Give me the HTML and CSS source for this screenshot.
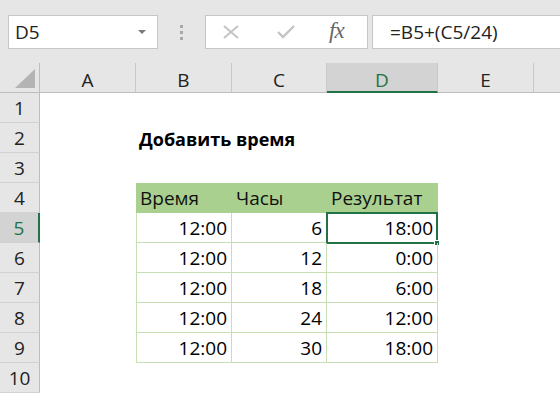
FILE: index.html
```html
<!DOCTYPE html>
<html lang="ru">
<head>
    <meta charset="UTF-8">
    <title>Добавить время</title>
    <link rel="stylesheet" href="styles.css">
</head>
<body>
    <div class="formula-bar">
        <div class="name-box">
            <span>D5</span>
            <span class="drop-arrow"></span>
        </div>
        <div class="grip"><i></i><i></i><i></i></div>
        <div class="fx-buttons">
            <svg class="btn-icon" width="18" height="14" viewBox="0 0 18 14">
                <path d="M2 1 L16 13 M16 1 L2 13" stroke="#c4c4c4" stroke-width="2" fill="none"/>
            </svg>
            <svg class="btn-icon" width="20" height="14" viewBox="0 0 20 14">
                <path d="M2 7 L7 12 L18 1" stroke="#c4c4c4" stroke-width="2.4" fill="none"/>
            </svg>
            <span class="fx">fx</span>
        </div>
        <div class="formula-input">=B5+(C5/24)</div>
    </div>

    <div class="sheet">
        <div class="corner"><span class="corner-tri"></span></div>
        <div class="col-head">A</div>
        <div class="col-head">B</div>
        <div class="col-head">C</div>
        <div class="col-head selected">D</div>
        <div class="col-head">E</div>
        <div class="col-head last"></div>

        <div class="row-head">1</div>
        <div class="cell"></div><div class="cell"></div><div class="cell"></div><div class="cell"></div><div class="cell"></div><div class="cell"></div>

        <div class="row-head">2</div>
        <div class="cell"></div><div class="cell title">Добавить время</div><div class="cell"></div><div class="cell"></div><div class="cell"></div><div class="cell"></div>

        <div class="row-head">3</div>
        <div class="cell"></div><div class="cell"></div><div class="cell"></div><div class="cell"></div><div class="cell"></div><div class="cell"></div>

        <div class="row-head">4</div>
        <div class="cell"></div>
        <div class="cell th">Время</div>
        <div class="cell th">Часы</div>
        <div class="cell th">Результат</div>
        <div class="cell"></div><div class="cell"></div>

        <div class="row-head selected">5</div>
        <div class="cell"></div>
        <div class="cell td first">12:00</div>
        <div class="cell td">6</div>
        <div class="cell td active">18:00<span class="handle"></span></div>
        <div class="cell"></div><div class="cell"></div>

        <div class="row-head">6</div>
        <div class="cell"></div>
        <div class="cell td first">12:00</div>
        <div class="cell td">12</div>
        <div class="cell td">0:00</div>
        <div class="cell"></div><div class="cell"></div>

        <div class="row-head">7</div>
        <div class="cell"></div>
        <div class="cell td first">12:00</div>
        <div class="cell td">18</div>
        <div class="cell td">6:00</div>
        <div class="cell"></div><div class="cell"></div>

        <div class="row-head">8</div>
        <div class="cell"></div>
        <div class="cell td first">12:00</div>
        <div class="cell td">24</div>
        <div class="cell td">12:00</div>
        <div class="cell"></div><div class="cell"></div>

        <div class="row-head">9</div>
        <div class="cell"></div>
        <div class="cell td first">12:00</div>
        <div class="cell td">30</div>
        <div class="cell td">18:00</div>
        <div class="cell"></div><div class="cell"></div>

        <div class="row-head">10</div>
        <div class="cell"></div><div class="cell"></div><div class="cell"></div><div class="cell"></div><div class="cell"></div><div class="cell"></div>
    </div>
</body>
</html>
```

FILE: styles.css
```css
* {
    margin: 0;
    padding: 0;
    box-sizing: border-box;
}

body {
    font-family: "Open Sans", "Noto Sans", sans-serif;
    font-size: 19px;
    color: #111;
    background: #fff;
    width: 560px;
    height: 394px;
    overflow: hidden;
}

/* Formula bar */
.formula-bar {
    height: 63px;
    background: #e6e6e6;
    display: flex;
    align-items: flex-start;
    padding: 15px 0 0 8px;
}

.name-box {
    width: 150px;
    height: 34px;
    background: #fff;
    border: 1px solid #c6c6c6;
    display: flex;
    align-items: center;
    justify-content: space-between;
    padding: 0 11px 0 6px;
    color: #222;
}

.drop-arrow {
    width: 0;
    height: 0;
    border-left: 4px solid transparent;
    border-right: 4px solid transparent;
    border-top: 4px solid #7a7a7a;
}

.grip {
    width: 47px;
    height: 34px;
    display: flex;
    flex-direction: column;
    align-items: center;
    justify-content: center;
    gap: 3px;
}

.grip i {
    display: block;
    width: 3px;
    height: 3px;
    background: #a8a8a8;
}

.fx-buttons {
    width: 163px;
    height: 34px;
    background: #fff;
    border: 1px solid #c6c6c6;
    display: flex;
    align-items: center;
    padding-left: 16px;
}

.btn-icon {
    display: block;
}

.btn-icon + .btn-icon {
    margin-left: 36px;
}

.fx {
    font-family: "Liberation Serif", serif;
    font-style: italic;
    font-size: 23px;
    color: #666;
    margin-left: 33px;
    margin-top: -3px;
    letter-spacing: -1px;
}

.formula-input {
    flex: 1;
    height: 34px;
    margin-left: 4px;
    margin-right: -4px;
    background: #fff;
    border: 1px solid #c6c6c6;
    display: flex;
    align-items: center;
    padding-left: 17px;
    color: #222;
}

/* Sheet grid */
.sheet {
    display: grid;
    grid-template-columns: 40px 96px 96px 95px 111px 96px 26px;
    grid-template-rows: 30px repeat(10, 30px);
}

.corner {
    background: #e6e6e6;
    border-right: 1px solid #bdbdbd;
    border-bottom: 1px solid #bdbdbd;
    position: relative;
}

.corner-tri {
    position: absolute;
    right: 4px;
    bottom: 4px;
    width: 20px;
    height: 19px;
    background: #b4b4b4;
    clip-path: polygon(100% 0, 100% 100%, 0 100%);
}

.col-head {
    background: #e6e6e6;
    border-right: 1px solid #c8c8c8;
    border-bottom: 1px solid #bdbdbd;
    display: flex;
    align-items: center;
    justify-content: center;
    color: #222;
    padding-top: 4px;
}

.col-head.last {
    border-right: none;
}

.col-head.selected {
    background: #d3d3d3;
    color: #217346;
    border-bottom: 2px solid #217346;
    padding-top: 5px;
}

.row-head {
    background: #e6e6e6;
    border-right: 1px solid #bdbdbd;
    border-bottom: 1px solid #d2d2d2;
    display: flex;
    align-items: center;
    justify-content: center;
    color: #222;
}

.row-head.selected {
    background: #d3d3d3;
    color: #217346;
    border-right: 2px solid #217346;
}

.cell {
    display: flex;
    align-items: center;
    padding: 0 4px;
    white-space: nowrap;
    position: relative;
}

.title {
    font-weight: bold;
    font-size: 18px;
    color: #000;
    padding-left: 3px;
    padding-top: 2px;
}

.th {
    background: #a9d08e;
    color: #111;
}

.td {
    justify-content: flex-end;
    border-right: 1px solid #c6dfb4;
    border-bottom: 1px solid #c6dfb4;
    color: #000;
}

.td.first {
    border-left: 1px solid #c6dfb4;
}

.td.active {
    border: 2px solid #217346;
    margin: -1px 0 -1px -1px;
    padding-right: 3px;
}

.handle {
    position: absolute;
    right: -4px;
    bottom: -4px;
    width: 6px;
    height: 6px;
    background: #217346;
    border: 1px solid #fff;
}
```
